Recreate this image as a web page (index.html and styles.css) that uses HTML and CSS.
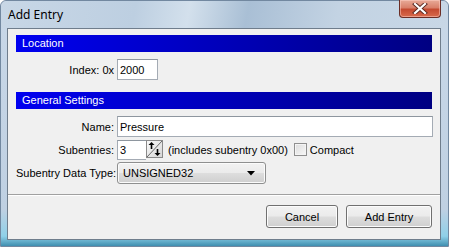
FILE: index.html
```html
<!DOCTYPE html>
<html lang="en">
<head>
    <meta charset="UTF-8">
    <title>Add Entry</title>
    <link rel="stylesheet" href="styles.css">
</head>
<body>
    <div class="window">
        <div class="titlebar">
            <span class="title">Add Entry</span>
            <div class="close-button">
                <svg width="16" height="11" viewBox="0 0 16 11">
                    <path d="M3 1 L13 10 M13 1 L3 10" stroke="#5a2a22" stroke-width="4" stroke-linecap="square"/>
                    <path d="M3 1 L13 10 M13 1 L3 10" stroke="#ffffff" stroke-width="2.2" stroke-linecap="square"/>
                </svg>
            </div>
        </div>
        <div class="client">
            <div class="section-header">Location</div>
            <div class="form-grid first">
                <label class="label">Index: 0x</label>
                <div class="field"><input class="input index-input" type="text" value="2000"></div>
            </div>

            <div class="section-header">General Settings</div>
            <div class="form-grid">
                <label class="label">Name:</label>
                <div class="field"><input class="input name-input" type="text" value="Pressure"></div>

                <label class="label">Subentries:</label>
                <div class="field">
                    <input class="input count-input" type="text" value="3">
                    <div class="spinner">
                        <svg width="17" height="18" viewBox="0 0 17 18">
                            <defs>
                                <linearGradient id="spin-bg" x1="0" y1="0" x2="1" y2="1">
                                    <stop offset="0" stop-color="#fafafa"/>
                                    <stop offset="1" stop-color="#d6d6d6"/>
                                </linearGradient>
                            </defs>
                            <rect x="0.5" y="0.5" width="16" height="17" fill="url(#spin-bg)" stroke="#8a8a8a"/>
                            <path d="M1 17 L16 1" stroke="#6a6a6a" stroke-width="1"/>
                            <path d="M5.5 9 V4" stroke="#000" stroke-width="1.6"/>
                            <path d="M2.5 5 L5.5 2 L8.5 5 Z" fill="#000"/>
                            <path d="M11.5 9 V14" stroke="#000" stroke-width="1.6"/>
                            <path d="M8.5 13 L11.5 16 L14.5 13 Z" fill="#000"/>
                        </svg>
                    </div>
                    <span class="hint">(includes subentry 0x00)</span>
                    <span class="checkbox"></span>
                    <span class="check-label">Compact</span>
                </div>

                <label class="label">Subentry Data Type:</label>
                <div class="field">
                    <div class="select">
                        <span>UNSIGNED32</span>
                        <svg width="8" height="5" viewBox="0 0 8 5"><path d="M0 0 H8 L4 4.5 Z" fill="#000"/></svg>
                    </div>
                </div>
            </div>

            <div class="separator"></div>

            <div class="button-bar">
                <button class="button cancel-button">Cancel</button>
                <button class="button add-button">Add Entry</button>
            </div>
        </div>
    </div>
</body>
</html>
```

FILE: styles.css
```css
/* dialog window */
html, body {
    margin: 0;
    padding: 0;
}
body {
    width: 449px;
    height: 247px;
    overflow: hidden;
    background: #ffffff;
    font-family: "Liberation Sans", Arial, sans-serif;
    font-size: 11px;
    color: #000;
}
.window {
    box-sizing: border-box;
    width: 449px;
    height: 247px;
    display: flex;
    flex-direction: column;
    border: 1px solid #7288a0;
    border-radius: 6px 6px 0 0;
    background: linear-gradient(to bottom, #c9d8e8 0%, #bfd0e2 85%, #8fd0e8 96%, #3f8fb0 100%);
}
.titlebar {
    height: 27px;
    display: flex;
    justify-content: space-between;
    align-items: flex-start;
    background: linear-gradient(100deg, #c8d7e6 0%, #bdcfe1 30%, #d3e0ec 42%, #a9bfd5 55%, #c3d3e3 75%, #c8d7e6 100%);
    border-radius: 6px 6px 0 0;
}
.title {
    font-family: "Noto Sans", "Open Sans", sans-serif;
    font-size: 12px;
    color: #000;
    margin: 5px 0 0 7px;
}
.close-button {
    box-sizing: border-box;
    width: 42px;
    height: 18px;
    margin: -1px 7px 0 0;
    display: flex;
    align-items: center;
    justify-content: center;
    border: 1px solid #6b2d25;
    border-top: none;
    border-radius: 0 0 4px 4px;
    background: linear-gradient(to bottom, #e8aa98 0%, #d9806a 45%, #c44a30 55%, #d86a4c 100%);
    box-shadow: inset 0 0 0 1px rgba(255, 210, 200, 0.5);
}
.client {
    flex: 1;
    margin: 0 7px 6px 6px;
    border: 1px solid #6f7d8c;
    background: #f0f0f0;
    display: flex;
    flex-direction: column;
    padding: 6px 0 0 0;
}

/* section headers */
.section-header {
    margin: 0 8px;
    height: 17px;
    line-height: 17px;
    padding-left: 6px;
    color: #ffffff;
    background: linear-gradient(to right, #0000f0, #000082);
}
.form-grid {
    display: grid;
    grid-template-columns: 98px 1fr;
    column-gap: 3px;
    row-gap: 2px;
    margin: 7px 8px 6px 8px;
    align-items: center;
}
.form-grid.first {
    margin-bottom: 12px;
}
.label {
    text-align: right;
    white-space: nowrap;
}
.field {
    display: flex;
    align-items: center;
    height: 21px;
}
.input {
    box-sizing: border-box;
    height: 21px;
    border: 1px solid #a4abb4;
    border-top-color: #8e969f;
    background: #fff;
    font-family: "Liberation Sans", Arial, sans-serif;
    font-size: 11px;
    padding: 0 2px;
    margin: 0;
    outline: none;
}
.index-input {
    width: 41px;
}
.name-input {
    width: 316px;
}
.count-input {
    width: 29px;
    height: 20px;
    border-right: none;
}
.spinner {
    display: flex;
    height: 18px;
    margin-top: -2px;
}
.hint {
    margin-left: 5px;
    white-space: nowrap;
}
.checkbox {
    box-sizing: border-box;
    width: 13px;
    height: 13px;
    margin-left: 6px;
    border: 1px solid #8f8f8f;
    background: linear-gradient(135deg, #dcdcdc, #f8f8f8);
    box-shadow: inset 0 0 0 1px #f4f4f4;
}
.check-label {
    margin-left: 3px;
}
.select {
    box-sizing: border-box;
    width: 149px;
    height: 22px;
    display: flex;
    align-items: center;
    justify-content: space-between;
    padding: 0 10px 0 5px;
    border: 1px solid #8e8f8f;
    border-radius: 3px;
    background: linear-gradient(to bottom, #f2f2f2 0%, #ebebeb 48%, #dddddd 52%, #cfcfcf 100%);
    box-shadow: inset 0 0 0 1px #fbfbfb;
}
.select svg {
    margin-top: 1px;
}

/* bottom buttons */
.separator {
    margin-top: 5px;
    border-top: 1px solid #a0a0a0;
    border-bottom: 1px solid #ffffff;
}
.button-bar {
    display: flex;
    justify-content: flex-end;
    gap: 8px;
    padding: 9px 8px 0 0;
}
.button {
    box-sizing: border-box;
    height: 23px;
    border: 1px solid #707070;
    border-radius: 3px;
    background: linear-gradient(to bottom, #f2f2f2 0%, #ebebeb 48%, #dddddd 52%, #cfcfcf 100%);
    box-shadow: inset 0 0 0 1px #fcfcfc;
    font-family: "Liberation Sans", Arial, sans-serif;
    font-size: 11px;
    color: #000;
    padding: 0;
}
.cancel-button {
    width: 72px;
}
.add-button {
    width: 86px;
}
```
